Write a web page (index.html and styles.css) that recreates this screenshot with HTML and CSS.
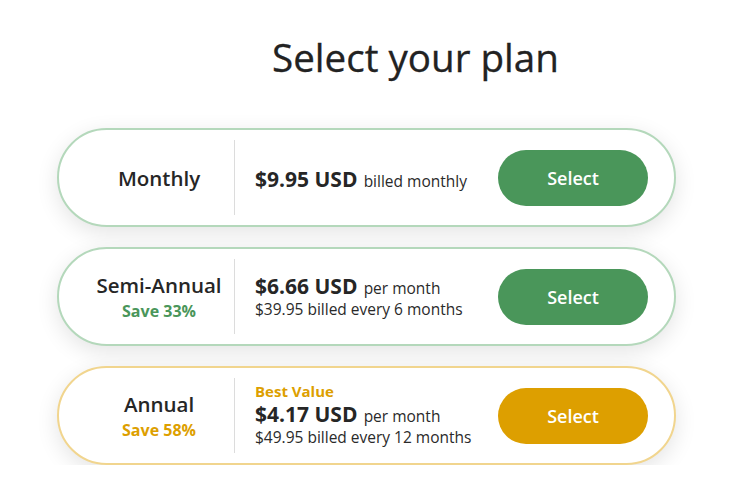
FILE: index.html
```html
<!DOCTYPE html>
<html lang="en">
<head>
<meta charset="utf-8">
<title>Select your plan</title>
<link rel="stylesheet" href="styles.css">
</head>
<body>
<main class="page">
  <h1 class="title">Select your plan</h1>
  <div class="plans">
    <div class="plan plan-green">
      <div class="plan-name">
        <div class="name">Monthly</div>
      </div>
      <div class="divider"></div>
      <div class="plan-price plan-price-single">
        <div class="price-line"><span class="price">$9.95 USD</span> <span class="per">billed monthly</span></div>
      </div>
      <button class="btn btn-green">Select</button>
    </div>
    <div class="plan plan-green">
      <div class="plan-name">
        <div class="name">Semi-Annual</div>
        <div class="save save-green">Save 33%</div>
      </div>
      <div class="divider"></div>
      <div class="plan-price">
        <div class="price-line"><span class="price">$6.66 USD</span> <span class="per">per month</span></div>
        <div class="billed">$39.95 billed every 6 months</div>
      </div>
      <button class="btn btn-green">Select</button>
    </div>
    <div class="plan plan-gold">
      <div class="plan-name">
        <div class="name">Annual</div>
        <div class="save save-gold">Save 58%</div>
      </div>
      <div class="divider"></div>
      <div class="plan-price plan-price-best">
        <div class="best">Best Value</div>
        <div class="price-line"><span class="price">$4.17 USD</span> <span class="per">per month</span></div>
        <div class="billed">$49.95 billed every 12 months</div>
      </div>
      <button class="btn btn-gold">Select</button>
    </div>
  </div>
</main>
</body>
</html>
```

FILE: styles.css
```css
* { box-sizing: border-box; }
body {
  margin: 0;
  background: #ffffff;
  font-family: "Open Sans", "Noto Sans", sans-serif;
  color: #262626;
}
.page {
  padding-top: 31px;
}
.title {
  margin: 0;
  padding-left: 98px;
  text-align: center;
  font-size: 38.6px;
  line-height: 53px;
  font-weight: 500;
  color: #222222;
  -webkit-text-stroke: 0.3px #222222;
}
.plans {
  margin: 44px auto 0;
  width: 619px;
  display: flex;
  flex-direction: column;
  gap: 20px;
}
.plan {
  height: 99px;
  border-radius: 50px;
  background: #ffffff;
  border: 2px solid #b4d8bb;
  box-shadow: 0 6px 22px rgba(0, 0, 0, 0.11);
  display: flex;
  align-items: center;
}
.plan-gold { border-color: #f1d58e; }
.plan-name {
  width: 175px;
  padding-left: 25px;
  text-align: center;
}
.name {
  font-size: 20.5px;
  line-height: 26px;
  font-weight: 600;
  color: #262626;
}
.save {
  margin-top: 2px;
  font-size: 16px;
  line-height: 22px;
  font-weight: 700;
}
.save-green { color: #4a965a; }
.save-gold { color: #dd9f00; }
.divider {
  width: 1px;
  height: 75px;
  background: #dcdcdc;
}
.plan-price {
  flex: 1;
  padding-left: 20px;
  padding-bottom: 2px;
}
.plan-price-single {
  padding-top: 5px;
  padding-bottom: 0;
}
.plan-price-best {
  padding-bottom: 4px;
}
.best {
  font-size: 15px;
  line-height: 19px;
  font-weight: 700;
  color: #dd9f00;
}
.price-line {
  line-height: 26px;
}
.price {
  font-size: 21px;
  font-weight: 700;
  color: #262626;
}
.per {
  margin-left: 2px;
  font-size: 15.5px;
  color: #2a2a2a;
}
.billed {
  font-size: 15.5px;
  line-height: 17px;
  color: #2a2a2a;
}
.btn {
  width: 150px;
  height: 56px;
  margin-right: 26px;
  border: none;
  border-radius: 28px;
  font-family: inherit;
  font-size: 18px;
  font-weight: 600;
  color: #ffffff;
  cursor: pointer;
}
.btn-green { background: #4a965a; }
.btn-gold { background: #dd9f00; }
```
